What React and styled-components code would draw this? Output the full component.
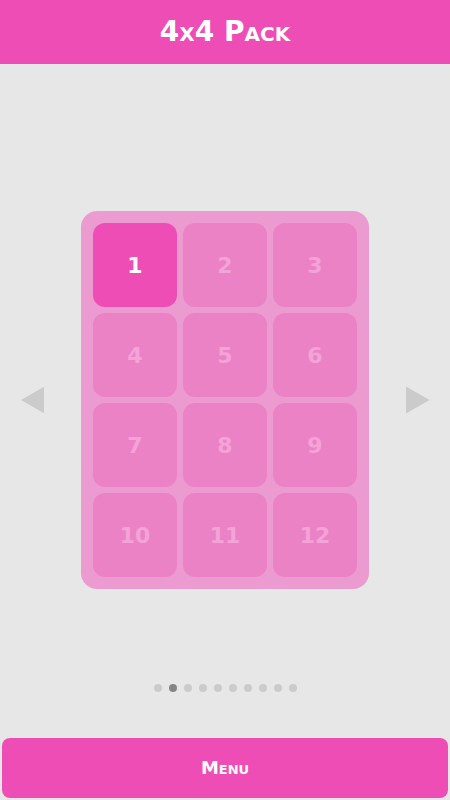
import React from "react";
import styled, { createGlobalStyle } from "styled-components";

const GlobalStyle = createGlobalStyle`
  *, *::before, *::after { box-sizing: border-box; }
  body {
    margin: 0;
    background: #e7e7e7;
    font-family: "Bank Gothic", "BankGothic Md BT", "DejaVu Sans", sans-serif;
  }
  button {
    margin: 0;
    padding: 0;
    border: 0;
    font: inherit;
    cursor: pointer;
  }
  button:disabled { cursor: default; }
`;

const Page = styled.div`
  display: flex;
  flex-direction: column;
  min-height: 100vh;
`;

const Header = styled.header`
  display: flex;
  align-items: center;
  justify-content: center;
  height: 64px;
  background: #ef4db6;
  color: #fff;
`;

const Title = styled.h1`
  margin: 0;
  font-size: 28px;
  line-height: 32px;
  font-weight: 700;
  font-variant-caps: small-caps;
`;

const Stage = styled.main`
  flex: 1;
  display: flex;
  align-items: center;
  justify-content: space-between;
  padding: 52px 20px 0;
`;

const ArrowButton = styled.button`
  display: flex;
  width: 24px;
  height: 28px;
  background: transparent;
  color: #cbcbcb;
`;

const Board = styled.div`
  display: grid;
  grid-template-columns: repeat(3, 84px);
  grid-auto-rows: 84px;
  gap: 6px;
  padding: 12px;
  border-radius: 16px;
  background: #eb9bd0;
`;

const Level = styled.button`
  padding-top: 2px;
  border-radius: 12px;
  background: ${({ $open }) => ($open ? "#ef4db6" : "#ec82c6")};
  color: ${({ $open }) => ($open ? "#fff" : "#f3a3d8")};
  font-size: 22px;
  line-height: 28px;
  font-weight: 700;
`;

const Dots = styled.nav`
  display: flex;
  justify-content: center;
  gap: 7px;
  padding-bottom: 46px;
`;

const Dot = styled.button`
  width: 8px;
  height: 8px;
  border-radius: 50%;
  background: ${({ $current }) => ($current ? "#858585" : "#cbcbcb")};
`;

const Footer = styled.footer`
  display: flex;
  padding: 0 2px 2px;
`;

const MenuButton = styled.button`
  flex: 1;
  height: 60px;
  border-radius: 8px;
  background: #ef4db6;
  color: #fff;
  font-size: 18px;
  line-height: 24px;
  font-weight: 700;
  font-variant-caps: small-caps;
`;

const levels = Array.from({ length: 12 }, (_, i) => i + 1);
const pages = Array.from({ length: 10 }, (_, i) => i + 1);
const currentPage = 2;

export default function App() {
  return (
    <Page>
      <GlobalStyle />
      <Header>
        <Title>4x4 Pack</Title>
      </Header>
      <Stage>
        <ArrowButton type="button" aria-label="Previous page">
          <svg width="24" height="28" viewBox="0 0 24 28" aria-hidden="true">
            <path d="M1 14 24.5 0.5V27.5Z" fill="currentColor" />
          </svg>
        </ArrowButton>
        <Board>
          {levels.map((n) => (
            <Level key={n} type="button" $open={n === 1} disabled={n !== 1}>
              {n}
            </Level>
          ))}
        </Board>
        <ArrowButton type="button" aria-label="Next page">
          <svg width="24" height="28" viewBox="0 0 24 28" aria-hidden="true">
            <path d="M23.5 14 0 0.5V27.5Z" fill="currentColor" />
          </svg>
        </ArrowButton>
      </Stage>
      <Dots aria-label="Pages">
        {pages.map((p) => (
          <Dot
            key={p}
            type="button"
            aria-label={`Page ${p}`}
            aria-current={p === currentPage ? "page" : undefined}
            $current={p === currentPage}
          />
        ))}
      </Dots>
      <Footer>
        <MenuButton type="button">Menu</MenuButton>
      </Footer>
    </Page>
  );
}
